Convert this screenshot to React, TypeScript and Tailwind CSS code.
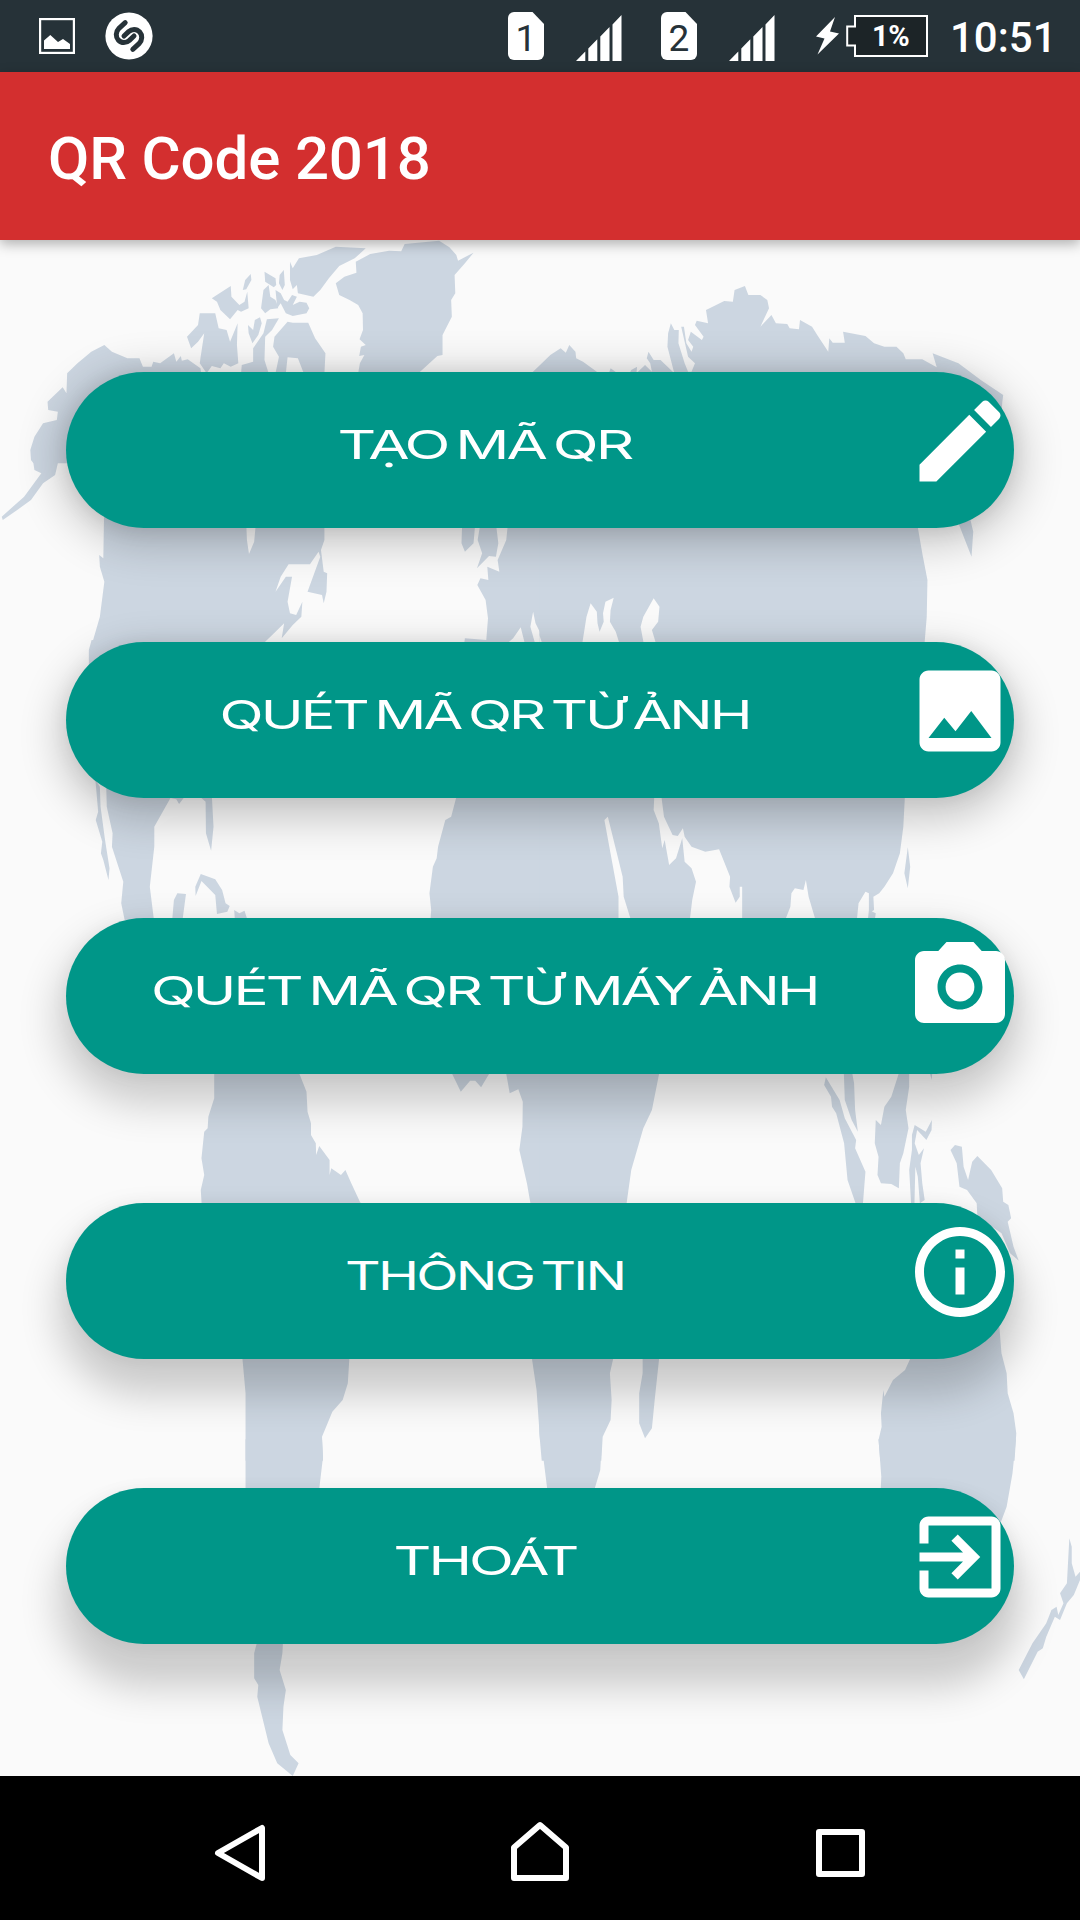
import type { ReactNode } from "react";

/* ---------- World map backdrop ---------- */

const LAND = "#ccd6e1";
const SEA = "#fafafa";

type Tile = { x: number; y: number; land: string; sea?: string };

const TILES: Tile[] = [
  {
    x: 0,
    y: 230,
    land: `M975,160 L1000,140 L1035,128 L1033,95 L1075,72 L1130,62 L1165,64 L1175,42 L1275,32 L1305,52 L1325,75 L1330,92 L1375,68 L1350,100 L1320,135 L1322,190 L1310,210 L1312,260 L1285,315 L1285,375 L1270,378 L1215,430 L1040,430 L1045,400 L1058,375 L1043,378 L1048,350 L1062,345 L1044,328 L1054,300 L1053,250 L1040,225 L1015,210 L985,195Z
    M842,95 L850,115 L868,85 L920,75 L975,50 L1062,55 L1030,85 L985,108 L955,145 L930,180 L910,200 L865,190 L862,165 L850,178 L842,150Z
    M705,180 L712,150 L728,132 L730,150 L715,178Z M768,125 L800,145 L802,165 L795,172 L770,155Z M812,135 L824,120 L827,165 L820,180 L810,160Z
    M615,205 L670,168 L672,200 L695,225 L710,215 L718,185 L722,235 L700,245 L690,240 L668,268 L640,240 L630,215Z
    M765,180 L780,165 L785,200 L800,210 L808,235 L785,238 L770,250 L758,235Z
    M800,180 L815,190 L825,210 L835,215 L848,195 L862,200 L850,225 L870,215 L890,218 L898,235 L890,250 L850,258 L830,250 L815,220 L805,235Z
    M580,250 L625,250 L635,295 L658,300 L668,335 L690,280 L688,345 L692,400 L670,410 L650,400 L640,415 L615,408 L600,430 L580,400 L582,385 L593,310 L575,335 L555,355 L543,320 L575,285Z
    M720,285 L735,300 L740,270 L755,262 L760,280 L750,315 L733,340 L722,310Z
    M775,268 L810,265 L790,300 L770,320 L768,390 L780,430 L700,430 L702,405 L735,395 L735,355 L765,310Z
    M850,278 L895,278 L915,325 L945,370 L942,430 L882,430 L865,385 L835,382 L830,430 L800,430 L810,380 L793,350 L797,320 L835,275Z
    M195,430 L225,400 L265,365 L303,345 L325,365 L370,385 L405,385 L415,410 L440,410 L445,395 L465,400 L505,370 L512,395 L525,378 L528,392 L545,388 L582,415 L590,470 L300,560 L195,700 L168,700 L160,735 L125,760 L90,810 L50,840 L8,870 L5,860 L70,800 L120,730 L100,720 L97,700 L90,690 L88,660 L100,620 L125,580 L165,570 L168,545 L140,540 L138,515 L182,472 L193,490Z
    M302,860 L300,985 L288,975 L290,1010 L303,1055 L290,1160 L262,1260 L755,1260 L770,1235 L800,1205 L825,1180 L818,1225 L850,1185 L875,1160 L878,1115 L860,1155 L842,1150 L835,1115 L848,1040 L830,1040 L800,1085 L815,1040 L838,1003 L900,1003 L925,965 L930,980 L893,1085 L935,1095 L940,1120 L948,1085 L950,1030 L940,1025 L932,960 L942,930 L942,880Z
    M1342,880 L1380,880 L1375,940 L1350,965 L1340,940Z M1395,880 L1440,880 L1447,940 L1440,980 L1420,978 L1385,1015 L1400,970 L1387,930Z
    M1475,880 L1470,930 L1445,990 L1450,1025 L1415,1010 L1418,1050 L1395,1045 L1386,1065 L1410,1110 L1417,1165 L1412,1230 L1350,1225 L1345,1260 L1572,1260 L1572,880Z`,
    sea: "M715,880 L717,930 L723,972 L738,935 L743,880Z M1467,1245 L1490,1225 L1512,1192 L1525,1245Z M1548,1145 L1540,1190 L1555,1245 L1572,1245 L1572,1215 L1555,1180Z",
  },
  {
    x: 540,
    y: 230,
    land: `M-25,430 L0,405 L30,375 L60,355 L75,368 L85,345 L103,365 L105,385 L125,395 L165,425 L165,440Z M200,430 L205,415 L225,430Z
    M255,440 L265,420 L282,410 L280,430 L305,405 L325,425 L320,400 L310,385 L315,365 L330,390 L350,390 L390,430 L370,350 L372,310 L380,280 L390,300 L403,300 L402,340 L420,400 L430,425 L440,425 L450,400 L430,380 L410,290 L418,290 L425,340 L440,365 L445,350 L430,330 L438,305 L470,330 L475,320 L450,285 L455,272 L488,280 L482,240 L535,213 L560,215 L565,180 L595,168 L605,195 L640,195 L660,210 L665,235 L640,290 L672,255 L685,280 L718,282 L725,295 L752,298 L755,270 L790,290 L805,315 L837,365 L840,325 L850,338 L885,338 L880,305 L945,318 L970,340 L1000,350 L1035,350 L1055,370 L1062,388 L1110,388 L1152,412 L1140,370 L1215,400 L1280,450 L1345,495 L1342,520 L1340,560 L1200,560 L300,560Z
    M-2,880 L1095,880 L1110,970 L1125,1050 L1123,1160 L1115,1260 L-2,1260Z M1215,880 L1250,870 L1258,905 L1253,980Z`,
    sea: "M122,1245 L135,1160 L147,1120 L165,1145 L167,1180 L173,1205 L185,1175 L183,1150 L190,1115 L214,1103 L205,1140 L203,1175 L220,1205 L232,1245Z M302,1245 L292,1190 L300,1160 L330,1105 L347,1130 L343,1175 L325,1200 L338,1245Z M-2,1215 L8,1245 L-2,1245Z",
  },
  {
    x: 0,
    y: 620,
    land: `M266,60 L258,90 L258,140 L350,66Z
    M277,480 L290,500 L292,560 L305,660 L318,745 L315,780 L300,720 L293,700 L297,665 L278,600 L285,575Z
    M308,480 L310,560 L327,640 L325,680 L358,785 L352,850 L362,900 L447,900 L435,800 L448,680 L448,620 L495,534 L512,538 L520,552 L540,525 L400,480Z
    M575,525 L597,545 L598,640 L613,692 L620,620 L615,525Z
    M568,828 L567,800 L583,762 L625,778 L645,810 L655,850 L667,858 L660,875 L630,882 L625,825 L585,783Z
    M500,900 L505,840 L515,820 L540,822 L530,900Z M680,870 L695,880 L710,872 L717,895 L682,900Z
    M1328,520 L1310,590 L1293,600 L1272,680 L1268,715 L1257,740 L1247,820 L1252,870 L1250,900 L1572,900 L1572,520Z`,
  },
  {
    x: 540,
    y: 620,
    land: `M-2,520 L1060,520 L1055,620 L1045,700 L1025,760 L1000,800 L985,820 L968,830 L970,870 L955,880 L955,820 L945,815 L925,850 L920,900 L800,900 L780,830 L772,780 L765,810 L740,805 L730,820 L727,860 L712,900 L587,900 L587,800 L580,800 L580,830 L568,848 L550,800 L552,770 L520,688 L480,695 L440,680 L420,650 L415,625 L400,648 L385,645 L360,590 L352,525 L332,525 L330,570 L345,610 L355,685 L362,660 L375,735 L395,715 L413,655 L420,725 L440,745 L453,785 L442,840 L435,900 L264,900 L243,830 L240,770 L197,590 L187,600 L228,830 L228,900 L-2,900Z
    M1068,682 L1075,740 L1068,805 L1058,760Z M955,870 L975,880 L972,900 L952,900Z`,
  },
  {
    x: 0,
    y: 1040,
    land: `M622,90 L622,175 L605,230 L603,265 L593,275 L585,355 L593,405 L583,450 L586,500 L1055,500 L1045,485 L1020,430 L1003,390 L990,405 L962,385 L957,405 L957,360 L927,318 L918,345 L917,310 L903,285 L903,250 L893,215 L890,155 L865,90Z
    M703,945 L713,1060 L713,1262 L938,1262 L935,1190 L965,1115 L995,1080 L1010,1030 L1015,945Z
    M1305,85 L1338,155 L1365,122 L1380,122 L1397,142 L1430,85Z M1468,90 L1480,160 L1505,148 L1518,185 L1517,260 L1508,330 L1530,430 L1542,500 L1572,500 L1572,90Z
    M1543,945 L1558,1050 L1568,1200 L1572,1200 L1572,945Z`,
  },
  {
    x: 540,
    y: 1040,
    land: `M-2,90 L348,90 L325,210 L300,265 L265,390 L250,500 L-2,500Z M-2,945 L215,945 L203,1000 L208,1080 L205,1140 L182,1190 L178,1262 L5,1262 L-2,1180Z
    M298,945 L298,1000 L288,1060 L288,1150 L305,1195 L325,1165 L333,1080 L347,945Z
    M830,112 L870,180 L885,235 L918,300 L915,325 L945,395 L937,500 L918,495 L893,420 L883,310 L860,220 L848,200 L845,170 L825,135Z
    M882,90 L905,90 L912,130 L915,210 L923,275 L905,240 L885,180Z
    M1045,90 L1072,90 L1072,140 L1062,210 L1070,265 L1055,340 L1045,370 L1042,445 L1020,432 L990,430 L980,405 L983,350 L972,310 L975,240 L990,255 L1000,200 L1020,170Z
    M1088,255 L1120,275 L1138,240 L1137,270 L1122,300 L1095,270 L1088,310 L1100,345 L1115,325 L1105,370 L1110,430 L1117,480 L1103,490 L1097,410 L1090,380 L1087,500 L1078,500 L1072,390 L1080,330 L1080,285Z
    M1130,90 L1140,90 L1137,120Z
    M1192,330 L1205,315 L1225,320 L1230,380 L1243,420 L1255,365 L1270,348 L1310,390 L1342,445 L1345,485 L1360,495 L1368,535 L1358,545 L1375,620 L1390,662 L1365,640 L1340,580 L1270,530 L1268,490 L1240,450 L1218,440 L1210,370Z
    M1333,850 L1340,940 L1355,1000 L1358,1060 L1375,1120 L1383,1180 L1378,1262 L988,1262 L983,1200 L992,1160 L990,1120 L997,1050 L1000,1070 L1025,1020 L1060,990 L1080,945 L1200,900Z`,
  },
  {
    x: 0,
    y: 1440,
    land: `M713,-2 L713,155 L926,155 L938,50 L935,-2Z
    M748,600 L738,640 L738,715 L750,735 L747,770 L780,910 L805,970 L850,1008 L867,970 L843,945 L820,870 L823,800 L830,750 L812,690 L820,640 L822,600Z`,
  },
  {
    x: 540,
    y: 1440,
    land: `M3,-2 L22,155 L156,155 L175,90 L180,-2Z M983,-2 L991,110 L989,155 L1200,260 L1335,255 L1355,200 L1372,100 L1382,-2Z
    M1537,295 L1544,320 L1544,370 L1555,410 L1568,395 L1568,420 L1550,465 L1530,490 L1510,540 L1495,530 L1470,590 L1460,625 L1445,635 L1405,718 L1390,690 L1430,610 L1470,550 L1485,510 L1500,500 L1505,525 L1520,490 L1510,460 L1530,430Z`,
  },
];

function WorldMap() {
  return (
    <svg className="absolute inset-0 h-full w-full" viewBox="0 240 1080 1536" aria-hidden="true">
      {TILES.map((t) => (
        <g key={`${t.x}-${t.y}`} transform={`translate(${t.x} ${t.y}) scale(0.34439 0.33333)`}>
          <path d={t.land} fill={LAND} />
          {t.sea && <path d={t.sea} fill={SEA} />}
        </g>
      ))}
    </svg>
  );
}

/* ---------- Status bar ---------- */

function PictureIcon() {
  return (
    <svg className="ml-[39px] h-9 w-9" viewBox="0 0 36 36" fill="none">
      <rect x="1.1" y="1.1" width="33.8" height="33.8" stroke="#fff" strokeWidth="2.2" />
      <path d="M5 31V22.5L11.3 17L19 24L24 21L31 26V31Z" fill="#fff" />
    </svg>
  );
}

function ShazamIcon() {
  return (
    <svg className="ml-[30px] h-12 w-12" viewBox="105 12 48 48" fill="none">
      <circle cx="129" cy="36" r="23.6" fill="#fff" />
      <g stroke="#263238" strokeWidth="5" strokeLinecap="round">
        <path d="M125.2 22.6L119 28.3C115.4 32 115.6 37 118.3 40C121.5 43.6 126.3 43.2 129.4 40.4L134 36" />
        <path d="M132.8 49.4L139 43.7C142.6 40 142.4 35 139.7 32C136.5 28.4 131.7 28.8 128.6 31.6L124 36" />
      </g>
    </svg>
  );
}

function Sim({ slot, className }: { slot: string; className: string }) {
  return (
    <div className={`relative flex h-12 w-9 items-center justify-center ${className}`}>
      <svg className="absolute inset-0" width="36" height="48" viewBox="0 0 36 48">
        <path d="M6 0H24.5L36 12V42A6 6 0 0 1 30 48H6A6 6 0 0 1 0 42V6A6 6 0 0 1 6 0Z" fill="#fff" />
      </svg>
      <span className="relative top-[2px] text-[37px] leading-none text-[#263238]">{slot}</span>
    </div>
  );
}

function Signal({ className }: { className: string }) {
  return (
    <svg className={className} width="46" height="46" viewBox="0 0 46 46" fill="#fff">
      <path d="M0 46L9.3 36.5V46ZM12.3 46V33.5L21.3 24.3V46ZM24.3 46V21.5L33.5 12V46ZM36.5 46V9.5L45.5 0V46Z" />
    </svg>
  );
}

function StatusBar() {
  return (
    <div className="flex h-[72px] items-center bg-[#263238]">
      <PictureIcon />
      <ShazamIcon />
      <Sim slot="1" className="ml-[355px]" />
      <Signal className="ml-[32px] mt-[3px]" />
      <Sim slot="2" className="ml-[39px]" />
      <Signal className="ml-[32px] mt-[3px]" />
      <svg className="ml-[41px]" width="24" height="38" viewBox="0 0 24 38" fill="#fff">
        <path d="M19 0L0 19.5L8.5 21.5L1.5 37.5L23 16.5L14 14.5Z" />
      </svg>
      <div className="relative ml-[6px] flex h-[42px] w-[82px] items-center">
        <svg className="absolute inset-0" width="82" height="42" viewBox="0 0 82 42">
          <path d="M9 1H81V41H9V30.5H1.2V11.5H9Z" fill="#1c2427" stroke="#fff" strokeWidth="2" />
        </svg>
        <span className="relative ml-[26px] text-[29px] font-bold leading-none tracking-[-0.5px] text-white">1%</span>
      </div>
      <span className="ml-[22px] mt-[3px] text-[42px] font-medium leading-none text-white">10:51</span>
    </div>
  );
}

/* ---------- Menu ---------- */

function Glyph({ children }: { children: ReactNode }) {
  return (
    <svg className="mt-[15px] size-[108px] shrink-0" viewBox="0 0 24 24" fill="#fff">
      {children}
    </svg>
  );
}

type Item = { label: string; text: string; box: string; icon: ReactNode };

const ITEMS: Item[] = [
  {
    label: "TẠO MÃ QR",
    text: "scale-x-[1.5]",
    box: "mt-[132px] shadow-[0_9px_44px_8px_rgba(0,0,0,0.2),0_2px_20px_rgba(0,0,0,0.1)]",
    icon: (
      <path d="M3 17.25V21h3.75L17.81 9.94l-3.75-3.75L3 17.25zM20.71 7.04c.39-.39.39-1.02 0-1.41l-2.34-2.34c-.39-.39-1.02-.39-1.41 0l-1.83 1.83 3.75 3.75 1.83-1.83z" />
    ),
  },
  {
    label: "QUÉT MÃ QR TỪ ẢNH",
    text: "scale-x-[1.44]",
    box: "mt-[114px] shadow-[0_15px_42px_7px_rgba(0,0,0,0.2),0_2px_20px_rgba(0,0,0,0.07)]",
    icon: (
      <path d="M21 19V5c0-1.1-.9-2-2-2H5c-1.1 0-2 .9-2 2v14c0 1.1.9 2 2 2h14c1.1 0 2-.9 2-2zM8.5 13.5l2.5 3.01L14.5 12l4.5 6H5l3.5-4.5z" />
    ),
  },
  {
    label: "QUÉT MÃ QR TỪ MÁY ẢNH",
    text: "scale-x-[1.464]",
    box: "mt-[120px] shadow-[0_22px_40px_8px_rgba(0,0,0,0.19),0_2px_18px_rgba(0,0,0,0.05)]",
    icon: (
      <>
        <circle cx="12" cy="12" r="3.2" />
        <path d="M9 2L7.17 4H4c-1.1 0-2 .9-2 2v12c0 1.1.9 2 2 2h16c1.1 0 2-.9 2-2V6c0-1.1-.9-2-2-2h-3.17L15 2H9zm3 15c-2.76 0-5-2.24-5-5s2.24-5 5-5 5 2.24 5 5-2.24 5-5 5z" />
      </>
    ),
  },
  {
    label: "THÔNG TIN",
    text: "scale-x-[1.382]",
    box: "mt-[129px] shadow-[0_28px_38px_8px_rgba(0,0,0,0.19),0_2px_18px_rgba(0,0,0,0.05)]",
    icon: (
      <path d="M11 17h2v-6h-2v6zm1-15C6.48 2 2 6.48 2 12s4.48 10 10 10 10-4.48 10-10S17.52 2 12 2zm0 18c-4.41 0-8-3.59-8-8s3.59-8 8-8 8 3.59 8 8-3.59 8-8 8zM11 9h2V7h-2v2z" />
    ),
  },
  {
    label: "THOÁT",
    text: "scale-x-[1.465]",
    box: "mt-[129px] shadow-[0_35px_38px_8px_rgba(0,0,0,0.19),0_2px_18px_rgba(0,0,0,0.05)]",
    icon: (
      <path d="M10.09 15.59L11.5 17l5-5-5-5-1.41 1.41L12.67 11H3v2h9.67l-2.58 2.59zM19 3H5c-1.11 0-2 .9-2 2v4h2V5h14v14H5v-4H3v4c0 1.1.89 2 2 2h14c1.1 0 2-.9 2-2V5c0-1.1-.9-2-2-2z" />
    ),
  },
];

function MenuButton({ item }: { item: Item }) {
  return (
    <button className={`flex h-[156px] w-full shrink-0 items-start rounded-full bg-[#009688] ${item.box}`}>
      <span className="flex flex-1 justify-center pt-[49px]">
        <span
          className={`whitespace-nowrap pr-[2px] font-[Inter,sans-serif] text-[40px] font-normal leading-[48px] tracking-[-2px] text-white [word-spacing:-4px] ${item.text}`}
        >
          {item.label}
        </span>
      </span>
      <Glyph>{item.icon}</Glyph>
    </button>
  );
}

/* ---------- Navigation bar ---------- */

function NavBar() {
  return (
    <nav className="flex h-36 items-center bg-black">
      <svg className="ml-[212px] mt-[10px]" width="56" height="62" viewBox="212 1822 56 62" fill="none">
        <path d="M218 1853L262 1828V1878Z" stroke="#fff" strokeWidth="6" strokeLinejoin="round" />
      </svg>
      <svg className="ml-[240px] mt-[7px]" width="64" height="65" viewBox="508 1819 64 65" fill="none">
        <path d="M540 1825L566 1847.5V1878H514V1847.5Z" stroke="#fff" strokeWidth="6" strokeLinejoin="round" />
      </svg>
      <svg className="ml-[241px] mt-[10px]" width="55" height="55" viewBox="813 1826 55 55" fill="none">
        <rect x="819" y="1832" width="43" height="42" stroke="#fff" strokeWidth="6" strokeLinejoin="round" />
      </svg>
    </nav>
  );
}

export default function App() {
  return (
    <div className="flex h-[1920px] w-[1080px] flex-col overflow-hidden bg-[#fafafa] font-[Roboto,sans-serif]">
      <StatusBar />
      <header className="relative z-10 flex h-[168px] items-center bg-[#d32f2f] pl-12 shadow-[0_4px_12px_rgba(0,0,0,0.3)]">
        <h1 className="mt-[5px] text-[60px] font-medium leading-none tracking-[-0.15px] text-white">QR Code 2018</h1>
      </header>
      <main className="relative flex h-[1536px] flex-col overflow-hidden">
        <WorldMap />
        <div className="relative flex flex-col px-[66px]">
          {ITEMS.map((item) => (
            <MenuButton key={item.label} item={item} />
          ))}
        </div>
      </main>
      <NavBar />
    </div>
  );
}
